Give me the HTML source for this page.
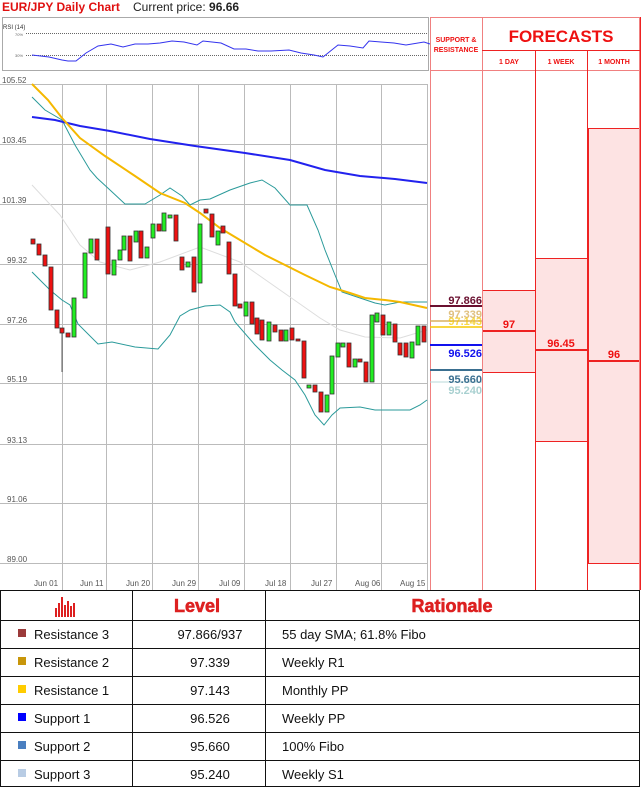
<!DOCTYPE html>
<html><head><meta charset="utf-8"><style>
body{margin:0;width:641px;height:787px;background:#fff;position:relative;overflow:hidden;font-family:"Liberation Sans",sans-serif}
.a{position:absolute}
</style></head><body>
<div class="a" style="left:2px;top:0;font-size:12px;font-weight:bold;color:#e01010">EUR/JPY Daily Chart</div>
<div class="a" style="left:133px;top:0;font-size:12px;color:#222">Current price: <b>96.66</b></div>
<svg class="a" style="left:0;top:0" width="641" height="787">
<!-- RSI -->
<rect x="2.5" y="17.5" width="426" height="53" fill="none" stroke="#aaa"/>
<text x="3" y="29" font-size="6" fill="#333" font-family="Liberation Sans">RSI (14)</text>
<text x="15" y="36" font-size="4" fill="#666">70%</text><text x="15" y="57" font-size="4" fill="#666">30%</text>
<line x1="26" y1="33.5" x2="427" y2="33.5" stroke="#666" stroke-dasharray="1,1"/>
<line x1="26" y1="55.5" x2="427" y2="55.5" stroke="#666" stroke-dasharray="1,1"/>
<polyline fill="none" stroke="#3333ee" stroke-width="1" points="32,55 49,57 62,60 68,61 76,61 86,53 98,46 111,44 123,47 135,44 148,44 160,43 172,41 184,42 197,45 203,41 221,43 234,49 246,49 258,51 271,51 289,50 301,53 314,55 323,57 338,45 350,46 363,48 369,41 381,42 394,43 406,45 424,42 430,44"/>
<!-- main chart grid -->
<g stroke="#bbb" stroke-width="1">
<line x1="0" y1="84.5" x2="427" y2="84.5"/><line x1="0" y1="144.5" x2="427" y2="144.5"/><line x1="0" y1="204.5" x2="427" y2="204.5"/><line x1="0" y1="264.5" x2="427" y2="264.5"/><line x1="0" y1="324.5" x2="427" y2="324.5"/><line x1="0" y1="383.5" x2="427" y2="383.5"/><line x1="0" y1="444.5" x2="427" y2="444.5"/><line x1="0" y1="503.5" x2="427" y2="503.5"/><line x1="0" y1="563.5" x2="427" y2="563.5"/>
<line x1="62.5" y1="84" x2="62.5" y2="590"/><line x1="106.5" y1="84" x2="106.5" y2="590"/><line x1="152.5" y1="84" x2="152.5" y2="590"/><line x1="198.5" y1="84" x2="198.5" y2="590"/><line x1="244.5" y1="84" x2="244.5" y2="590"/><line x1="290.5" y1="84" x2="290.5" y2="590"/><line x1="336.5" y1="84" x2="336.5" y2="590"/><line x1="381.5" y1="84" x2="381.5" y2="590"/><line x1="427.5" y1="84" x2="427.5" y2="590"/>
</g>
<g font-size="8" fill="#555" font-family="Liberation Sans">
<text x="2" y="83">105.52</text><text x="2" y="143">103.45</text><text x="2" y="203">101.39</text><text x="7" y="263">99.32</text><text x="7" y="323">97.26</text><text x="7" y="382">95.19</text><text x="7" y="443">93.13</text><text x="7" y="502">91.06</text><text x="7" y="562">89.00</text>
<text x="34" y="586">Jun 01</text><text x="80" y="586">Jun 11</text><text x="126" y="586">Jun 20</text><text x="172" y="586">Jun 29</text><text x="219" y="586">Jul 09</text><text x="265" y="586">Jul 18</text><text x="311" y="586">Jul 27</text><text x="355" y="586">Aug 06</text><text x="400" y="586">Aug 15</text>
</g>
<polyline fill="none" stroke="#ddd" points="32,185 60,215 80,245 100,262 130,270 160,262 200,247 240,262 280,290 320,318 340,330 365,337 400,338 427,330"/>
<polyline fill="none" stroke="#2a9a9a" points="32,97 45,110 62,120 75,145 90,170 97,178 110,190 125,204 145,204 160,195 170,188 182,196 190,205 200,200 210,199 230,190 250,183 262,180 275,188 290,205 307,205 318,230 325,250 335,275 342,292 360,298 375,303 385,305 400,302 420,302 427,302"/>
<polyline fill="none" stroke="#2a9a9a" points="32,272 50,290 62,300 70,305 78,324 98,344 112,342 135,347 158,349 170,335 180,316 190,310 205,306 220,305 230,312 235,322 255,345 270,360 282,370 295,380 305,395 315,415 324,425 332,415 340,408 360,407 375,410 395,410 410,410 420,405 427,400"/>
<polyline fill="none" stroke="#2222ee" stroke-width="2" points="32,117 55,120 80,126 110,131 150,139 195,146 245,153 290,160 325,170 360,176 395,179 427,183"/>
<polyline fill="none" stroke="#f5b800" stroke-width="2" points="32,84 48,100 62,118 80,138 105,156 135,176 160,193 185,203 200,213 220,228 240,240 265,255 285,265 305,275 330,287 350,293 365,298 385,300 400,302 427,308"/>
<g stroke="#333" stroke-width="0.8">
<g fill="#ee1111">
<rect x="31" y="239" width="4" height="5"/><rect x="37" y="244" width="4" height="11"/><rect x="43" y="255" width="4" height="11"/><rect x="49" y="267" width="4" height="43"/><rect x="55" y="310" width="4" height="18"/><rect x="60" y="328" width="4" height="5"/><rect x="66" y="333" width="4" height="4"/><rect x="95" y="239" width="4" height="21"/><rect x="106" y="227" width="4" height="47"/><rect x="128" y="236" width="4" height="25"/><rect x="139" y="231" width="4" height="27"/><rect x="157" y="224" width="4" height="7"/><rect x="174" y="215" width="4" height="26"/><rect x="180" y="257" width="4" height="13"/><rect x="192" y="257" width="4" height="35"/><rect x="204" y="209" width="4" height="4"/><rect x="210" y="214" width="4" height="23"/><rect x="221" y="226" width="4" height="7"/><rect x="227" y="242" width="4" height="32"/><rect x="233" y="274" width="4" height="32"/><rect x="238" y="304" width="4" height="4"/><rect x="250" y="302" width="4" height="22"/><rect x="255" y="318" width="4" height="16"/><rect x="260" y="320" width="4" height="20"/><rect x="273" y="325" width="4" height="7"/><rect x="279" y="330" width="4" height="11"/><rect x="290" y="328" width="4" height="12"/><rect x="296" y="339" width="4" height="2"/><rect x="302" y="341" width="4" height="37"/><rect x="313" y="385" width="4" height="7"/><rect x="319" y="392" width="4" height="20"/><rect x="347" y="343" width="4" height="24"/><rect x="358" y="359" width="4" height="3"/><rect x="364" y="362" width="4" height="20"/><rect x="381" y="315" width="4" height="20"/><rect x="393" y="324" width="4" height="18"/><rect x="398" y="343" width="4" height="12"/><rect x="404" y="343" width="4" height="14"/><rect x="422" y="326" width="4" height="16"/>
</g>
<g fill="#22ee22">
<rect x="72" y="298" width="4" height="39"/><rect x="83" y="253" width="4" height="45"/><rect x="89" y="239" width="4" height="14"/><rect x="112" y="260" width="4" height="15"/><rect x="118" y="250" width="4" height="10"/><rect x="122" y="236" width="4" height="14"/><rect x="134" y="231" width="4" height="11"/><rect x="145" y="247" width="4" height="11"/><rect x="151" y="224" width="4" height="14"/><rect x="162" y="213" width="4" height="18"/><rect x="168" y="215" width="4" height="3"/><rect x="186" y="262" width="4" height="5"/><rect x="198" y="224" width="4" height="59"/><rect x="216" y="231" width="4" height="14"/><rect x="244" y="302" width="4" height="14"/><rect x="267" y="322" width="4" height="19"/><rect x="284" y="330" width="4" height="11"/><rect x="307" y="385" width="4" height="3"/><rect x="325" y="395" width="4" height="17"/><rect x="330" y="356" width="4" height="38"/><rect x="336" y="343" width="4" height="14"/><rect x="341" y="343" width="4" height="4"/><rect x="353" y="359" width="4" height="8"/><rect x="370" y="315" width="4" height="67"/><rect x="375" y="313" width="4" height="9"/><rect x="387" y="322" width="4" height="13"/><rect x="410" y="342" width="4" height="16"/><rect x="416" y="326" width="4" height="19"/>
</g>
<line x1="62" y1="333" x2="62" y2="372"/>
</g>
<!-- right panel -->
<g fill="#fde3e3" stroke="#ee2222">
<rect x="482.5" y="290.5" width="53" height="82"/><rect x="535.5" y="258.5" width="52" height="183"/><rect x="588.5" y="128.5" width="52" height="435"/>
</g>
<g stroke="#ee2222" stroke-width="2"><line x1="482" y1="331" x2="535" y2="331"/><line x1="535" y1="350" x2="588" y2="350"/><line x1="588" y1="361" x2="641" y2="361"/></g>
<g stroke="#f08080" fill="none">
<rect x="430.5" y="17.5" width="209" height="573"/>
<line x1="482.5" y1="17" x2="482.5" y2="590"/><line x1="430" y1="70.5" x2="640" y2="70.5"/>
</g>
<g stroke="#ee2222"><line x1="482" y1="50.5" x2="640" y2="50.5"/><line x1="535.5" y1="50" x2="535.5" y2="590"/><line x1="587.5" y1="50" x2="587.5" y2="590"/><line x1="640.5" y1="17" x2="640.5" y2="590"/></g>
<g font-family="Liberation Sans" font-weight="bold" fill="#ee1111" text-anchor="middle">
<text x="456" y="42" font-size="7">SUPPORT &amp;</text><text x="456" y="52" font-size="7">RESISTANCE</text>
<text x="561" y="42" font-size="17">FORECASTS</text>
<text x="509" y="64" font-size="7">1 DAY</text><text x="561" y="64" font-size="7">1 WEEK</text><text x="614" y="64" font-size="7">1 MONTH</text>
<text x="509" y="328" font-size="11">97</text><text x="561" y="347" font-size="11">96.45</text><text x="614" y="358" font-size="11">96</text>
</g>
<line x1="430" y1="306" x2="482" y2="306" stroke="#6a1030" stroke-width="2"/>
<line x1="430" y1="321" x2="482" y2="321" stroke="#d8b060" stroke-width="1.5"/>
<line x1="430" y1="327" x2="482" y2="327" stroke="#f5c800" stroke-width="1.5"/>
<line x1="430" y1="345" x2="482" y2="345" stroke="#1111ee" stroke-width="2"/>
<line x1="430" y1="370" x2="482" y2="370" stroke="#3a6f90" stroke-width="2"/>
<line x1="430" y1="382" x2="482" y2="382" stroke="#b8d8d8" stroke-width="1"/>
<g font-family="Liberation Sans" font-weight="bold" font-size="11" text-anchor="end">
<text x="482" y="304" fill="#6a1030">97.866</text><text x="482" y="318" fill="#e0c080">97.339</text><text x="482" y="325" fill="#f5c800" opacity=".7">97.143</text>
<text x="482" y="357" fill="#1111ee">96.526</text><text x="482" y="383" fill="#3a6f90">95.660</text><text x="482" y="394" fill="#a8d0d0">95.240</text>
</g>
<!-- table -->
<g stroke="#111" stroke-width="1" fill="none">
<rect x="0.5" y="590.5" width="639" height="196"/>
<line x1="132.5" y1="590" x2="132.5" y2="787"/><line x1="265.5" y1="590" x2="265.5" y2="787"/>
<line x1="0" y1="620.5" x2="640" y2="620.5"/><line x1="0" y1="648.5" x2="640" y2="648.5"/><line x1="0" y1="676.5" x2="640" y2="676.5"/><line x1="0" y1="704.5" x2="640" y2="704.5"/><line x1="0" y1="732.5" x2="640" y2="732.5"/><line x1="0" y1="760.5" x2="640" y2="760.5"/>
</g>
<g fill="#dd2020"><rect x="55" y="608" width="2" height="9"/><rect x="58" y="603" width="2" height="14"/><rect x="61" y="597" width="2" height="20"/><rect x="64" y="605" width="2" height="12"/><rect x="67" y="601" width="2" height="16"/><rect x="70" y="606" width="2" height="11"/><rect x="73" y="603" width="2" height="14"/></g>
<g font-family="Liberation Sans" font-weight="bold" font-size="18" fill="#dd2020" text-anchor="middle" stroke="#dd2020" stroke-width="0.6"><text x="197" y="612">Level</text><text x="452" y="612">Rationale</text></g>
<rect x="18" y="629" width="8" height="8" fill="#9b3a3a"/><rect x="18" y="657" width="8" height="8" fill="#c8960a"/><rect x="18" y="685" width="8" height="8" fill="#ffcc00"/><rect x="18" y="713" width="8" height="8" fill="#0000ff"/><rect x="18" y="741" width="8" height="8" fill="#4a7fc0"/><rect x="18" y="769" width="8" height="8" fill="#b8cce4"/>
<g font-family="Liberation Sans" font-size="13" fill="#111">
<text x="34" y="639">Resistance 3</text><text x="34" y="667">Resistance 2</text><text x="34" y="695">Resistance 1</text><text x="34" y="723">Support 1</text><text x="34" y="751">Support 2</text><text x="34" y="779">Support 3</text>
<g text-anchor="middle"><text x="210" y="639">97.866/937</text><text x="210" y="667">97.339</text><text x="210" y="695">97.143</text><text x="210" y="723">96.526</text><text x="210" y="751">95.660</text><text x="210" y="779">95.240</text></g>
<text x="282" y="639">55 day SMA;  61.8% Fibo</text><text x="282" y="667">Weekly R1</text><text x="282" y="695">Monthly PP</text><text x="282" y="723">Weekly PP</text><text x="282" y="751">100% Fibo</text><text x="282" y="779">Weekly S1</text>
</g>
</svg>
</body></html>
